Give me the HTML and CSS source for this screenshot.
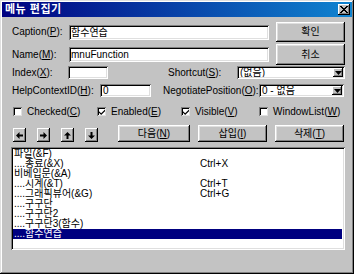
FILE: index.html
```html
<!DOCTYPE html>
<html lang="ko">
<head>
<meta charset="utf-8">
<title>메뉴 편집기</title>
<link rel="stylesheet" href="styles.css">
</head>
<body>
<div class="win">
  <div class="titlebar">
    <span class="title">메뉴 편집기</span>
    <span class="close"><svg width="8" height="7" viewBox="0 0 8 7"><path d="M0 0h2v1h1v1h2V1h1V0h2v1H7v1H6v1H5v1h1v1h1v1h1v1H6V6H5V5H3v1H2v1H0V6h1V5h1V4h1V3H2V2H1V1H0z" fill="#000"/></svg></span>
  </div>
  <div class="content">
    <div class="row r1">
      <span class="lbl w-cap">Caption(<u>P</u>):</span>
      <span class="field w-long">함수연습</span>
      <span class="btn w-ok">확인</span>
    </div>
    <div class="row r2">
      <span class="lbl w-cap">Name(<u>M</u>):</span>
      <span class="field w-long">mnuFunction</span>
      <span class="btn w-ok">취소</span>
    </div>
    <div class="row r3">
      <span class="lbl w-idx">Index(<u>X</u>):</span>
      <span class="field small w-idxf"></span>
      <span class="lbl w-sc">Shortcut(<u>S</u>):</span>
      <span class="combo w-scc"><span class="ctext">(없음)</span><span class="dd"><svg width="7" height="4" viewBox="0 0 7 4"><path d="M0 0h7L3.5 4z" fill="#000"/></svg></span></span>
    </div>
    <div class="row r4">
      <span class="lbl w-help">HelpContextID(<u>H</u>):</span>
      <span class="field small w-helpf">0</span>
      <span class="lbl w-neg">NegotiatePosition(<u>O</u>):</span>
      <span class="combo w-negc"><span class="ctext">0 - 없음</span><span class="dd"><svg width="7" height="4" viewBox="0 0 7 4"><path d="M0 0h7L3.5 4z" fill="#000"/></svg></span></span>
    </div>
    <div class="row r5">
      <label class="chk c1"><span class="box"></span>Checked(<u>C</u>)</label>
      <label class="chk c2"><span class="box"><svg width="7" height="7" viewBox="0 0 7 7"><path d="M0 2.5l2.5 2.5L7 0.5v2L2.5 7 0 4.5z" fill="#000"/></svg></span>Enabled(<u>E</u>)</label>
      <label class="chk c3"><span class="box"><svg width="7" height="7" viewBox="0 0 7 7"><path d="M0 2.5l2.5 2.5L7 0.5v2L2.5 7 0 4.5z" fill="#000"/></svg></span>Visible(<u>V</u>)</label>
      <label class="chk c4"><span class="box"></span>WindowList(<u>W</u>)</label>
    </div>
    <div class="row r6">
      <span class="arrows">
        <span class="abtn"><svg width="7" height="7" viewBox="0 0 7 7"><path d="M0 3.5L3.5 0v2.5H7v2H3.5V7z" fill="#000"/></svg></span>
        <span class="abtn"><svg width="7" height="7" viewBox="0 0 7 7"><path d="M7 3.5L3.5 0v2.5H0v2h3.5V7z" fill="#000"/></svg></span>
        <span class="abtn"><svg width="7" height="7" viewBox="0 0 7 7"><path d="M3.5 0L0 3.5h2.5V7h2V3.5H7z" fill="#000"/></svg></span>
        <span class="abtn"><svg width="7" height="7" viewBox="0 0 7 7"><path d="M3.5 7L0 3.5h2.5V0h2v3.5H7z" fill="#000"/></svg></span>
      </span>
      <span class="btn w-next">다음(<u>N</u>)</span>
      <span class="btn w-ins">삽입(<u>I</u>)</span>
      <span class="btn w-del">삭제(<u>T</u>)</span>
    </div>
    <div class="list">
      <div class="item"><span class="name">파일(&amp;F)</span></div>
      <div class="item"><span class="name">....종료(&amp;X)</span><span class="key">Ctrl+X</span></div>
      <div class="item"><span class="name">비베입문(&amp;A)</span></div>
      <div class="item"><span class="name">....시계(&amp;T)</span><span class="key">Ctrl+T</span></div>
      <div class="item"><span class="name">....그래픽뷰어(&amp;G)</span><span class="key">Ctrl+G</span></div>
      <div class="item"><span class="name">....구구단</span></div>
      <div class="item"><span class="name">....구구단2</span></div>
      <div class="item"><span class="name">....구구단3(함수)</span></div>
      <div class="item sel"><span class="name">....함수연습</span></div>
    </div>
  </div>
</div>
</body>
</html>
```
FILE: styles.css
```css
* { box-sizing: border-box; }
html, body { margin: 0; padding: 0; }
body {
  width: 354px;
  height: 274px;
  overflow: hidden;
  background: #c0c0c0;
  font-family: "Liberation Sans", "Noto Sans CJK KR", sans-serif;
  font-size: 10px;
  color: #000;
}
u { text-decoration: underline; text-underline-offset: 1px; }

.win {
  width: 354px;
  height: 274px;
  background: #c3c3c3;
  padding: 2px;
  box-shadow: inset -1px -1px #000, inset 1px 1px #dfdfdf, inset -2px -2px #808080, inset 2px 2px #fff;
  display: flex;
  flex-direction: column;
}
.titlebar {
  height: 15px;
  flex: none;
  background: linear-gradient(to right, #000080, #1084d0);
  display: flex;
  align-items: center;
  justify-content: space-between;
  padding: 0 2px 0 3px;
}
.title {
  color: #fff;
  font-weight: bold;
  font-size: 11px;
  line-height: 15px;
  letter-spacing: 0.5px;
}
.close {
  width: 12px;
  height: 11px;
  background: #c0c0c0;
  box-shadow: inset -1px -1px #000, inset 1px 1px #fff, inset -2px -2px #808080;
  display: flex;
  align-items: center;
  justify-content: center;
}

.content {
  padding: 0 8px 0 10px;
  display: flex;
  flex-direction: column;
}
.row { display: flex; align-items: center; }
.r1 { margin-top: 5px; height: 20px; }
.r2 { margin-top: 2px; height: 21px; }
.r3 { margin-top: 1px; height: 13px; }
.r4 { margin-top: 5px; height: 13px; }
.r5 { margin-top: 9px; height: 11px; }
.r6 { margin-top: 8px; height: 17px; align-items: flex-end; }

.lbl { white-space: nowrap; line-height: 12px; flex: none; }
.w-cap { width: 57px; }
.w-idx { width: 56px; }
.w-sc { width: 69px; margin-left: 60px; }
.w-help { width: 88px; }
.w-neg { width: 96px; margin-left: 12px; }

.field {
  flex: none;
  height: 15px;
  background: #fff;
  box-shadow: inset 1px 1px #808080, inset -1px -1px #fff, inset 2px 2px #000, inset -2px -2px #dfdfdf;
  padding: 0 2px;
  line-height: 15px;
  white-space: nowrap;
  overflow: hidden;
}
.field.small { height: 13px; line-height: 13px; }
.w-long { width: 200px; margin-right: 7px; }
.w-idxf { width: 40px; }
.w-helpf { width: 51px; padding-left: 3px; }

.combo {
  flex: none;
  height: 13px;
  background: #fff;
  box-shadow: inset 1px 1px #808080, inset -1px -1px #fff, inset 2px 2px #000, inset -2px -2px #dfdfdf;
  display: flex;
  align-items: stretch;
  padding: 2px;
}
.w-scc { width: 108px; }
.w-negc { width: 85px; }
.ctext { flex: 1; line-height: 9px; padding-left: 1px; white-space: nowrap; overflow: hidden; }
.dd {
  width: 10px;
  background: #c0c0c0;
  box-shadow: inset -1px -1px #000, inset 1px 1px #fff, inset -2px -2px #808080;
  display: flex;
  align-items: center;
  justify-content: center;
}

.btn {
  flex: none;
  height: 100%;
  background: #c3c3c3;
  box-shadow: inset -1px -1px #000, inset 1px 1px #fff, inset -2px -2px #808080, inset 2px 2px #dfdfdf;
  display: flex;
  align-items: center;
  justify-content: center;
  white-space: nowrap;
  line-height: 12px;
}
.w-ok { width: 69px; }
.w-next { width: 72px; margin-left: 20px; }
.w-ins { width: 69px; margin-left: 8px; }
.w-del { width: 69px; margin-left: 8px; }

.arrows { display: flex; gap: 11px; margin-left: 1px; }
.abtn {
  width: 13px;
  height: 14px;
  background: #c3c3c3;
  box-shadow: inset -1px -1px #000, inset 1px 1px #fff, inset -2px -2px #808080;
  display: flex;
  align-items: center;
  justify-content: center;
}

.chk { display: flex; align-items: center; white-space: nowrap; line-height: 11px; flex: none; }
.box {
  width: 9px;
  height: 9px;
  background: #fff;
  box-shadow: inset 1px 1px #808080, inset -1px -1px #dfdfdf, inset 2px 2px #000;
  margin-right: 5px;
  display: flex;
  align-items: center;
  justify-content: center;
  padding: 1px 0 0 1px;
}
.box svg { width: 6px; height: 6px; }
.c1 { margin-left: 1px; width: 84px; }
.c2 { width: 84px; }
.c3 { width: 78px; }

.list {
  margin-top: 5px;
  margin-left: -1px;
  width: 334px;
  height: 103px;
  background: #fff;
  box-shadow: inset 1px 1px #808080, inset -1px -1px #fff, inset 2px 2px #000, inset -2px -2px #dfdfdf;
  padding: 2px 3px 2px 2px;
  overflow: hidden;
}
.item {
  display: flex;
  height: 10px;
  line-height: 10px;
  white-space: nowrap;
  padding-left: 1px;
}
.item .name { width: 186px; flex: none; }
.item.sel { background: #000080; color: #fff; }
```
